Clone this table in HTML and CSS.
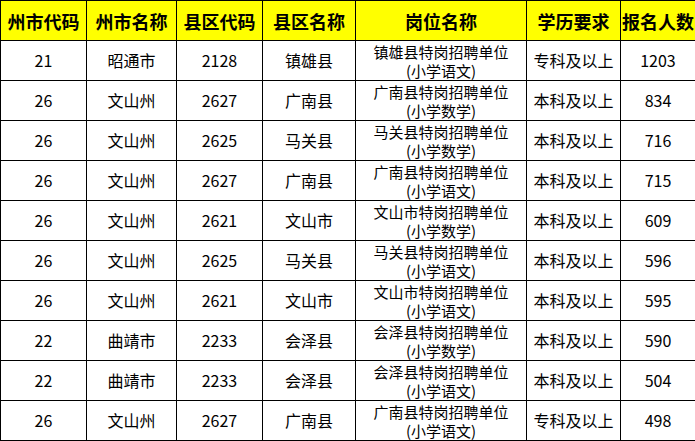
FILE: index.html
```html
<!DOCTYPE html>
<html lang="zh">
<head>
<meta charset="utf-8">
<link rel="stylesheet" href="styles.css">
</head>
<body>
<table class="grid">
<colgroup>
<col class="c1"><col class="c2"><col class="c3"><col class="c4"><col class="c5"><col class="c6"><col class="c7">
</colgroup>
<thead>
<tr><th>州市代码</th><th>州市名称</th><th>县区代码</th><th>县区名称</th><th>岗位名称</th><th>学历要求</th><th>报名人数</th></tr>
</thead>
<tbody>
<tr><td>21</td><td>昭通市</td><td>2128</td><td>镇雄县</td><td class="pos">镇雄县特岗招聘单位<br>(小学语文)</td><td>专科及以上</td><td>1203</td></tr>
<tr><td>26</td><td>文山州</td><td>2627</td><td>广南县</td><td class="pos">广南县特岗招聘单位<br>(小学数学)</td><td>本科及以上</td><td>834</td></tr>
<tr><td>26</td><td>文山州</td><td>2625</td><td>马关县</td><td class="pos">马关县特岗招聘单位<br>(小学数学)</td><td>本科及以上</td><td>716</td></tr>
<tr><td>26</td><td>文山州</td><td>2627</td><td>广南县</td><td class="pos">广南县特岗招聘单位<br>(小学语文)</td><td>本科及以上</td><td>715</td></tr>
<tr><td>26</td><td>文山州</td><td>2621</td><td>文山市</td><td class="pos">文山市特岗招聘单位<br>(小学数学)</td><td>本科及以上</td><td>609</td></tr>
<tr><td>26</td><td>文山州</td><td>2625</td><td>马关县</td><td class="pos">马关县特岗招聘单位<br>(小学语文)</td><td>本科及以上</td><td>596</td></tr>
<tr><td>26</td><td>文山州</td><td>2621</td><td>文山市</td><td class="pos">文山市特岗招聘单位<br>(小学语文)</td><td>本科及以上</td><td>595</td></tr>
<tr><td>22</td><td>曲靖市</td><td>2233</td><td>会泽县</td><td class="pos">会泽县特岗招聘单位<br>(小学数学)</td><td>本科及以上</td><td>590</td></tr>
<tr><td>22</td><td>曲靖市</td><td>2233</td><td>会泽县</td><td class="pos">会泽县特岗招聘单位<br>(小学语文)</td><td>本科及以上</td><td>504</td></tr>
<tr><td>26</td><td>文山州</td><td>2627</td><td>广南县</td><td class="pos">广南县特岗招聘单位<br>(小学语文)</td><td>专科及以上</td><td>498</td></tr>
</tbody>
</table>
</body>
</html>
```
FILE: styles.css
```css
html, body {
  margin: 0;
  padding: 0;
  background: #ffffff;
}
.grid {
  border-collapse: collapse;
  table-layout: fixed;
  width: 695px;
  font-family: "Noto Sans CJK SC", "Noto Sans", sans-serif;
  color: #000000;
}
.c1 { width: 86px; }
.c2 { width: 90px; }
.c3 { width: 86px; }
.c4 { width: 93px; }
.c5 { width: 171px; }
.c6 { width: 94px; }
.c7 { width: 75px; }
.grid th, .grid td {
  border: 1px solid #000000;
  padding: 0;
  height: 39px;
  text-align: center;
  vertical-align: middle;
  overflow: hidden;
  white-space: nowrap;
}
.grid th {
  background: #ffff00;
  font-size: 18px;
  font-weight: 700;
  line-height: 20px;
}
.grid td {
  font-size: 16px;
  font-weight: 400;
  line-height: 19px;
}
.grid td.pos {
  font-size: 15px;
}
```
